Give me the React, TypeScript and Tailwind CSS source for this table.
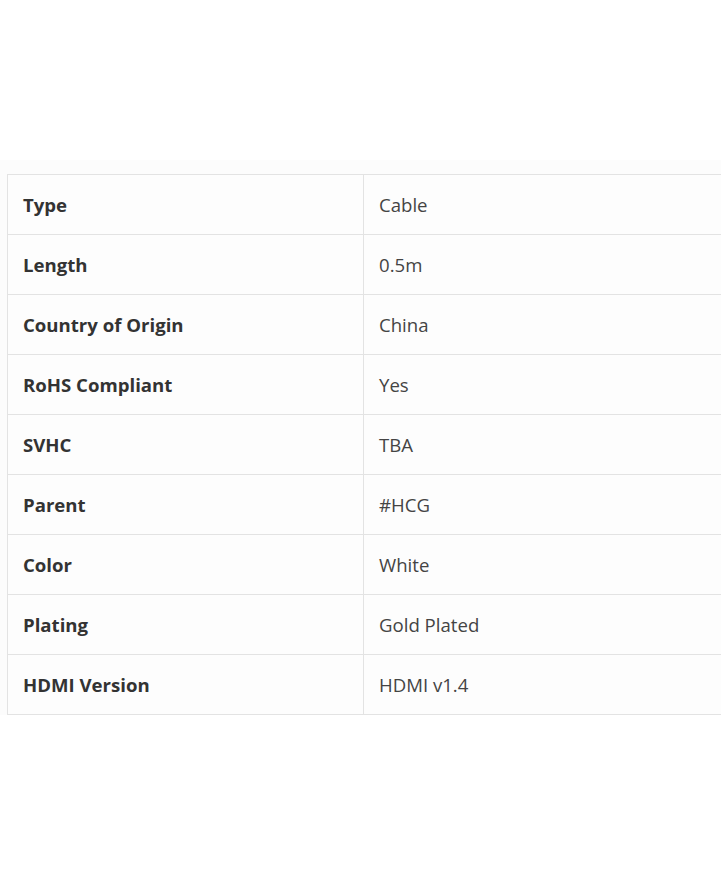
import React from "react";

const rows: [string, string][] = [
  ["Type", "Cable"],
  ["Length", "0.5m"],
  ["Country of Origin", "China"],
  ["RoHS Compliant", "Yes"],
  ["SVHC", "TBA"],
  ["Parent", "#HCG"],
  ["Color", "White"],
  ["Plating", "Gold Plated"],
  ["HDMI Version", "HDMI v1.4"],
];

export default function App() {
  return (
    <div
      className="w-[721px] h-[891px] bg-white overflow-hidden"
      style={{ fontFamily: '"Open Sans", "Noto Sans", sans-serif' }}
    >
      <div className="mt-[160px] pt-[14px] bg-[#fcfcfc] pl-[7px]">
        <table className="w-[720px] border-collapse bg-[#fdfdfd]">
          <tbody>
            {rows.map(([k, v]) => (
              <tr key={k} className="h-[60px]">
                <td className="w-[356px] border border-[#e3e3e3] px-[15px] pt-[1px] text-[18.6px] font-bold text-[#333333] align-middle">
                  {k}
                </td>
                <td className="border border-[#e3e3e3] px-[15px] pt-[1px] text-[18.6px] text-[#444444] align-middle">
                  {v}
                </td>
              </tr>
            ))}
          </tbody>
        </table>
      </div>
    </div>
  );
}
